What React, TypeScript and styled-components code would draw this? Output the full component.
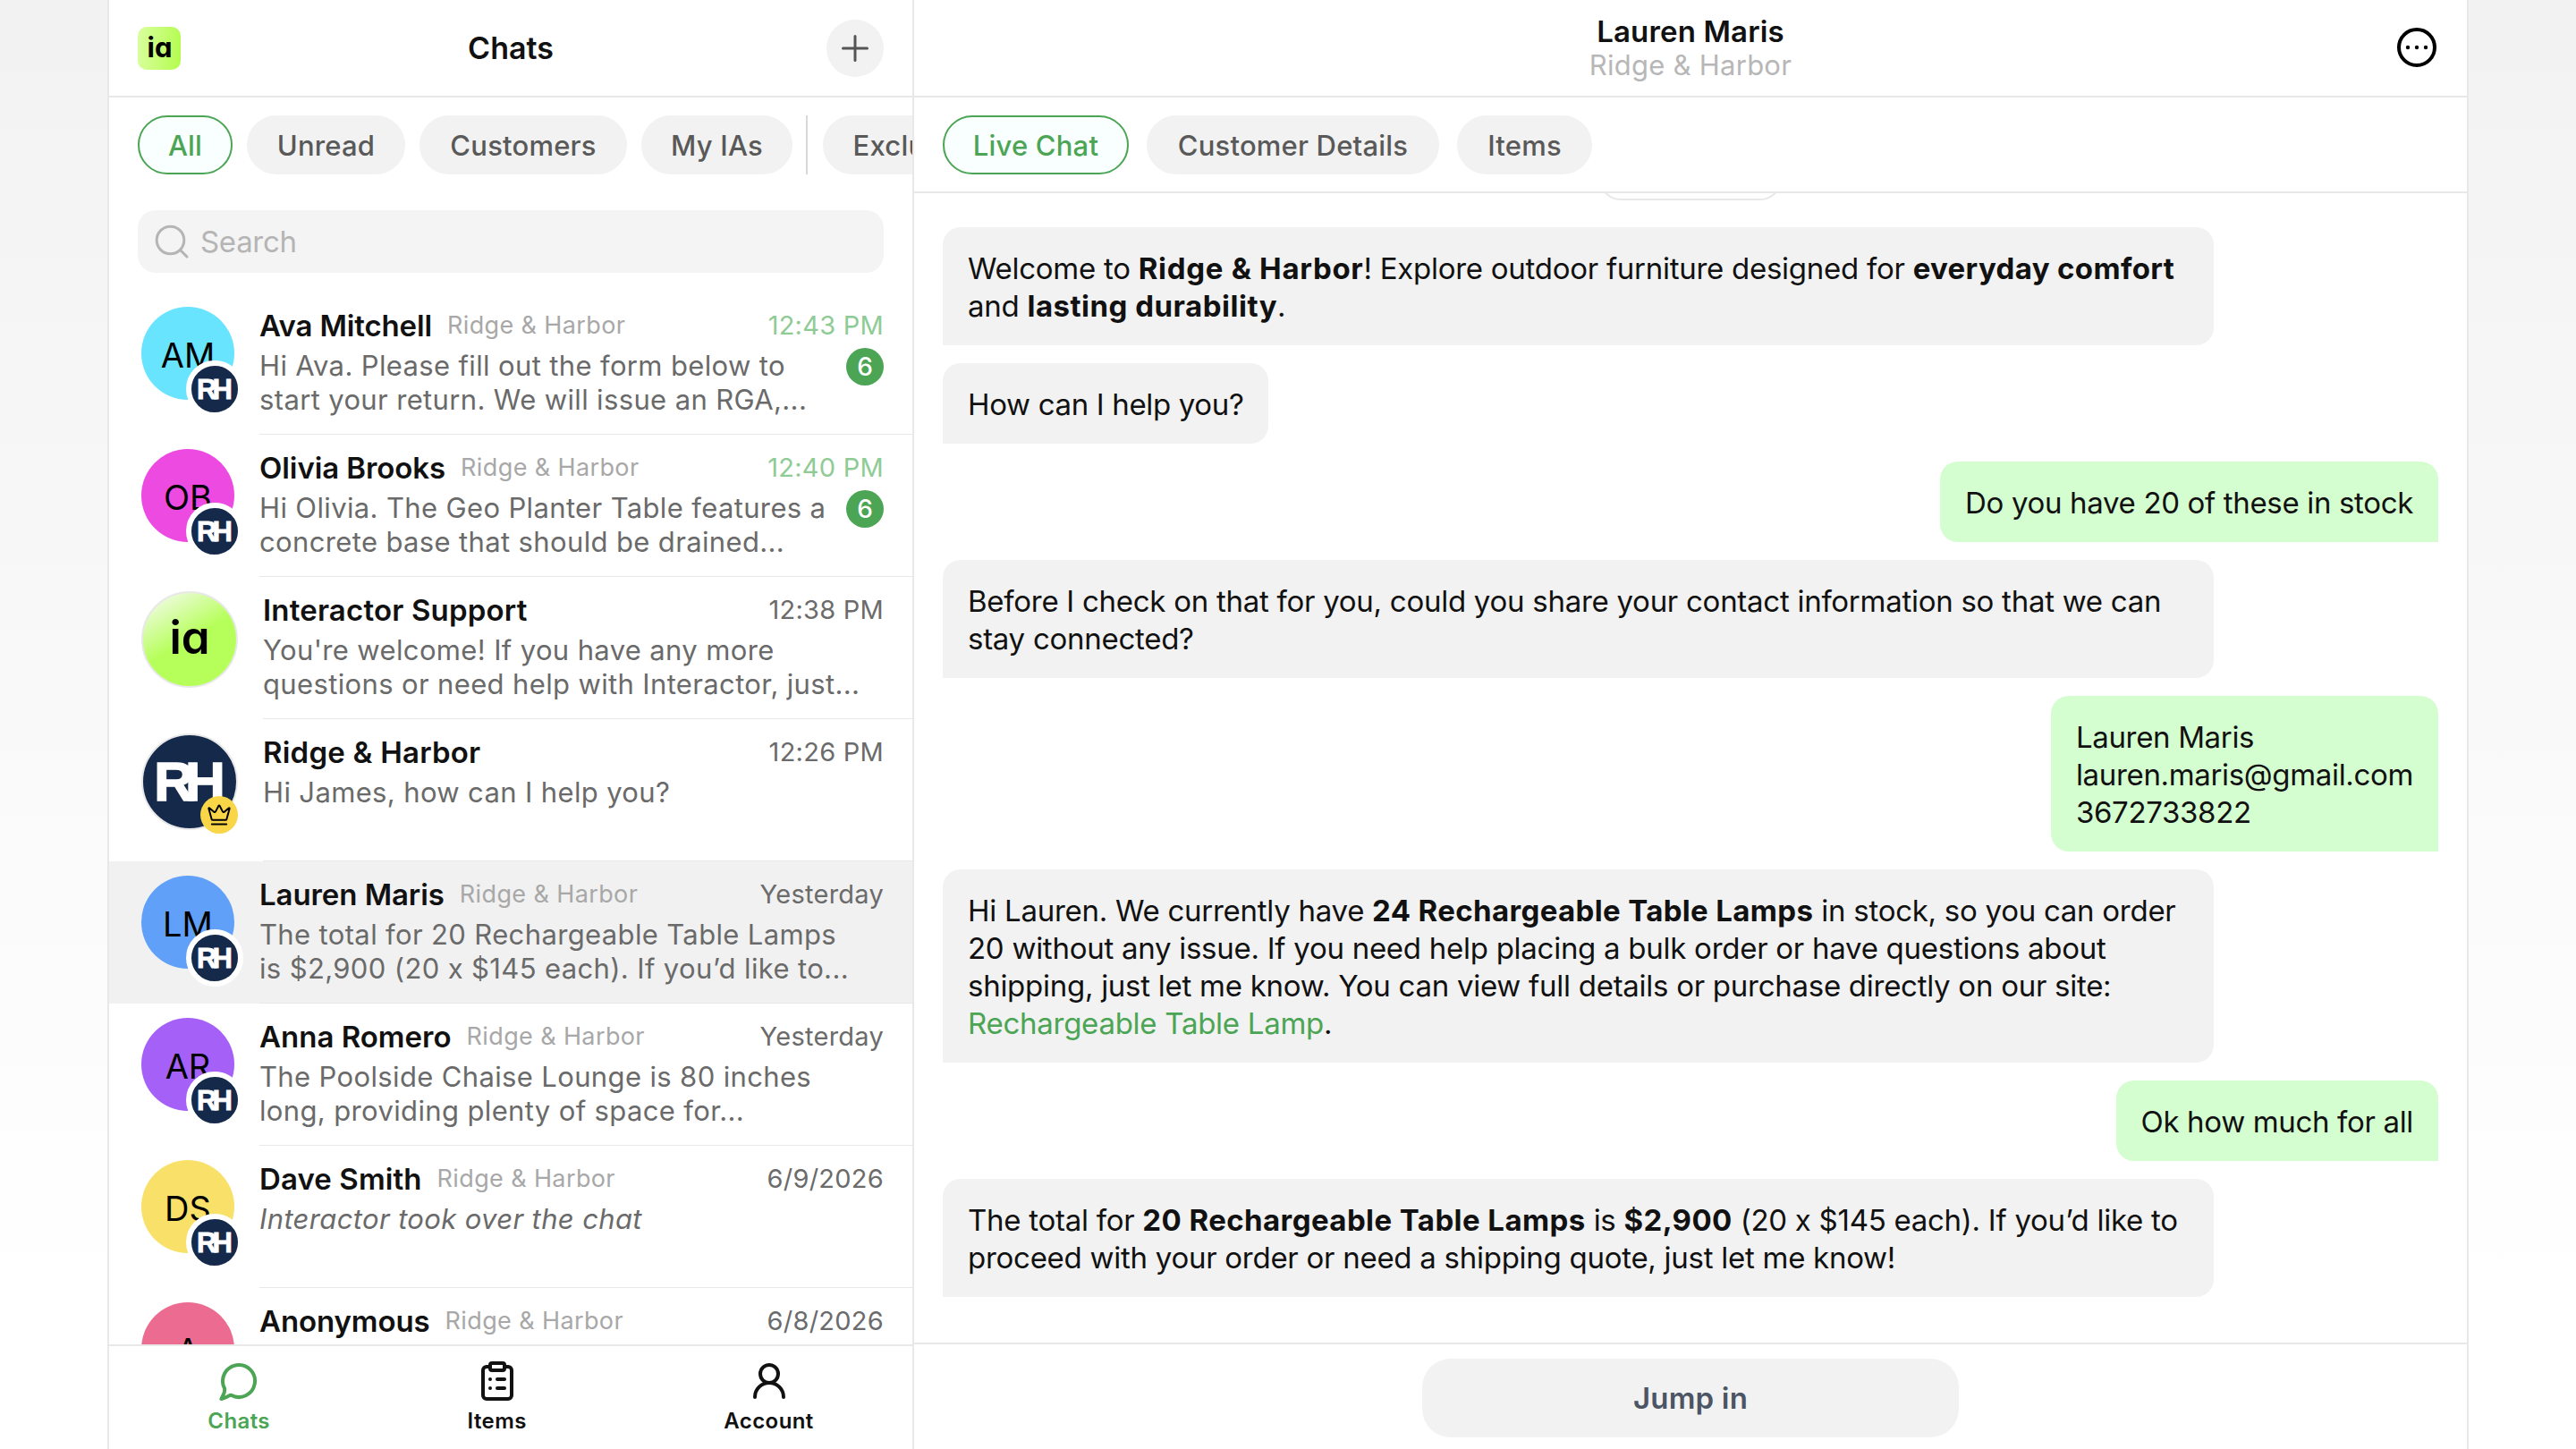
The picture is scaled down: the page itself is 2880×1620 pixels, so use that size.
import React from "react";
import styled, { createGlobalStyle, css } from "styled-components";
import { ClipboardList, Crown, UserRound } from "lucide-react";

const line = "#e8e8e8";
const green = "#4ba554";
const navy = "#15294b";

const GlobalStyle = createGlobalStyle`
  *, *::before, *::after { box-sizing: border-box; }
  html, body { margin: 0; padding: 0; }
  body {
    font-family: Inter, "Liberation Sans", sans-serif;
    color: #111;
    background: #fff;
    overflow: hidden;
  }
  button { font: inherit; border: 0; }
`;

const Page = styled.div`
  display: flex;
  justify-content: center;
  height: 100vh;
  background: linear-gradient(180deg, #f2f2f2 0, #fff 1450px);
`;

const Shell = styled.div`
  display: flex;
  width: 2640px;
  height: 100%;
  background: #fff;
  border: solid ${line};
  border-width: 0 2px;
`;

/* ---------- Sidebar ---------- */

const Sidebar = styled.aside`
  display: flex;
  flex-direction: column;
  flex: none;
  width: 900px;
  border-right: 2px solid ${line};
`;

const SidebarHeader = styled.header`
  display: grid;
  grid-template-columns: 64px 1fr 64px;
  align-items: center;
  flex: none;
  height: 109px;
  padding: 0 32px;
  border-bottom: 2px solid ${line};
`;

const BrandMark = styled.div`
  display: flex;
  align-items: center;
  justify-content: center;
  width: 48px;
  height: 48px;
  padding: 0 0 3px 1px;
  border-radius: 10px;
  background: linear-gradient(95deg, #daff9f, #b3fc4e);
  color: #000;
  font-size: 31px;
  font-weight: 700;
  line-height: 1;
  font-feature-settings: "cv11";
`;

const SidebarTitle = styled.h1`
  margin: 0;
  font-size: 34px;
  font-weight: 600;
  line-height: 40px;
  text-align: center;
`;

const RoundButton = styled.button`
  display: flex;
  align-items: center;
  justify-content: center;
  width: 64px;
  height: 64px;
  padding: 0;
  border-radius: 50%;
  background: #f2f2f2;
`;

const ChipRow = styled.nav<{ $gap: number }>`
  display: flex;
  flex: none;
  gap: ${(p) => p.$gap}px;
  padding: 20px 0 0 32px;
  overflow: hidden;
`;

const SidebarChips = styled(ChipRow)`
  height: 86px;
`;

const Chip = styled.button<{ $active?: boolean; $width: number }>`
  display: flex;
  align-items: center;
  justify-content: center;
  flex: none;
  width: ${(p) => p.$width}px;
  height: 66px;
  padding: 0;
  border: 2px solid ${(p) => (p.$active ? green : "#f2f2f2")};
  border-radius: 33px;
  background: ${(p) => (p.$active ? "#f9fffe" : "#f2f2f2")};
  color: ${(p) => (p.$active ? green : "#595959")};
  font-size: 31px;
  font-weight: 500;
  letter-spacing: 0.2px;
  white-space: nowrap;
`;

const ChipDivider = styled.span`
  flex: none;
  width: 2px;
  height: 66px;
  margin-left: -1px;
  margin-right: 1px;
  background: #d9d9d9;
`;

const SearchBox = styled.div`
  display: flex;
  align-items: center;
  gap: 12px;
  flex: none;
  height: 70px;
  margin: 40px 32px 22px;
  padding: 0 0 0 18px;
  border-radius: 20px;
  background: #f4f4f4;
  color: #b5b5b5;
  font-size: 33px;
  letter-spacing: -0.3px;
`;

const List = styled.div`
  flex: 1;
  min-height: 0;
  overflow: hidden;
`;

const Row = styled.article<{ $selected?: boolean }>`
  display: flex;
  height: 159px;
  padding-left: 36px;
  background: ${(p) => (p.$selected ? "#f1f1f1" : "#fff")};
`;

const AvatarSlot = styled.div`
  position: relative;
  flex: none;
  align-self: flex-start;
  margin: 16px 28px 0 0;
`;

const InitialsAvatar = styled.div<{ $color: string }>`
  display: flex;
  align-items: center;
  justify-content: center;
  width: 104px;
  height: 104px;
  padding-top: 3px;
  border-radius: 50%;
  background: ${(p) => p.$color};
  color: #000;
  font-size: 38px;
  line-height: 1;
`;

const BrandBadge = styled.div`
  position: absolute;
  right: -10px;
  bottom: -20px;
  display: flex;
  align-items: center;
  justify-content: center;
  width: 64px;
  height: 64px;
  border: 6px solid #fff;
  border-radius: 50%;
  background: ${navy};
`;

const Monogram = styled.span<{ $size: number }>`
  margin-right: 0.16em;
  color: #fff;
  font-family: "Liberation Sans", sans-serif;
  font-size: ${(p) => p.$size}px;
  font-weight: 700;
  line-height: 1;
  letter-spacing: -0.16em;
  -webkit-text-stroke: 0.025em #fff;
`;

const LogoAvatar = styled.div<{ $brand: "ia" | "rh" }>`
  display: flex;
  align-items: center;
  justify-content: center;
  width: 108px;
  height: 108px;
  border: 2px solid ${line};
  border-radius: 50%;
  line-height: 1;
  ${(p) =>
    p.$brand === "ia"
      ? css`
          padding-bottom: 5px;
          background: linear-gradient(150deg, #f0fbe2 8%, #b6ff5a 50%);
          color: #000;
          font-size: 51px;
          font-weight: 600;
          font-feature-settings: "cv11";
        `
      : css`
          background: ${navy};
        `}
`;

const CrownBadge = styled.div`
  position: absolute;
  right: 0;
  bottom: -4px;
  display: flex;
  align-items: center;
  justify-content: center;
  width: 42px;
  height: 42px;
  border-radius: 50%;
  background: #f8d648;
  color: #000;
`;

const RowBody = styled.div`
  flex: 1;
  min-width: 0;
  padding: 17px 32px 0 0;
  border-bottom: 1px solid ${line};
`;

const RowTop = styled.div`
  display: flex;
  align-items: center;
  height: 40px;
  line-height: 40px;
  white-space: nowrap;
`;

const Name = styled.span<{ $tracking?: number }>`
  font-size: 33px;
  font-weight: 600;
  letter-spacing: ${(p) => p.$tracking ?? 0}px;
`;

const Company = styled.span`
  margin-left: 17px;
  color: #a8a8a8;
  font-size: 27px;
  letter-spacing: 0.38px;
`;

const Time = styled.span<{ $unread?: boolean }>`
  margin-left: auto;
  color: ${(p) => (p.$unread ? "#8fcb95" : "#6b6b6b")};
  font-size: 29px;
  letter-spacing: 0.25px;
`;

const RowBottom = styled.div`
  display: flex;
  justify-content: space-between;
  align-items: flex-start;
  padding-top: 5px;
`;

const Preview = styled.p<{ $italic?: boolean }>`
  margin: 1px 0 0;
  color: #6a6a6a;
  font-size: 31px;
  font-style: ${(p) => (p.$italic ? "italic" : "normal")};
  line-height: 38px;
  letter-spacing: 0.36px;
  white-space: pre;
`;

const Unread = styled.span`
  display: flex;
  align-items: center;
  justify-content: center;
  width: 42px;
  height: 42px;
  border-radius: 50%;
  background: ${green};
  color: #fff;
  font-size: 28px;
  font-weight: 500;
`;

const BottomNav = styled.nav`
  display: flex;
  justify-content: space-around;
  flex: none;
  height: 117px;
  padding-top: 15px;
  border-top: 2px solid ${line};
`;

const NavItem = styled.a<{ $active?: boolean }>`
  display: flex;
  flex-direction: column;
  align-items: center;
  gap: 7px;
  color: ${(p) => (p.$active ? green : "#111")};
  font-size: 24px;
  font-weight: 600;
  line-height: 28px;
  letter-spacing: 0.4px;
`;

/* ---------- Conversation ---------- */

const Conversation = styled.main`
  display: flex;
  flex-direction: column;
  flex: 1;
  min-width: 0;
`;

const ConversationHeader = styled.header`
  display: grid;
  grid-template-columns: 44px 1fr 44px;
  flex: none;
  height: 109px;
  padding: 16px 34px 0;
  border-bottom: 2px solid ${line};
`;

const Heading = styled.div`
  grid-column: 2;
  text-align: center;
  line-height: 38px;
`;

const ContactName = styled.div`
  font-size: 33px;
  font-weight: 600;
  letter-spacing: 0.15px;
`;

const ContactCompany = styled.div`
  color: #b7b7b7;
  font-size: 31px;
  letter-spacing: 0.25px;
`;

const MoreButton = styled.button`
  display: flex;
  height: 44px;
  margin-top: 15px;
  padding: 0;
  background: none;
`;

const Tabs = styled(ChipRow)`
  height: 107px;
  border-bottom: 2px solid ${line};
`;

const Messages = styled.section`
  display: flex;
  flex-direction: column;
  justify-content: flex-end;
  gap: 20px;
  flex: 1;
  min-height: 0;
  padding: 0 32px 51px;
  overflow: hidden;
`;

const DatePill = styled.div`
  flex: none;
  align-self: center;
  width: 204px;
  height: 60px;
  margin-bottom: 10px;
  border: 2px solid ${line};
  border-radius: 24px;
`;

const Bubble = styled.div<{ $mine?: boolean; $wide?: boolean }>`
  flex: none;
  align-self: ${(p) => (p.$mine ? "flex-end" : "flex-start")};
  width: ${(p) => (p.$wide ? "85%" : "auto")};
  padding: 25px 28px 23px;
  border-radius: ${(p) => (p.$mine ? "20px 20px 0 20px" : "20px 20px 20px 0")};
  background: ${(p) => (p.$mine ? "#d4fdd0" : "#f2f2f2")};
  font-size: 33px;
  line-height: 42px;
  letter-spacing: ${(p) => (p.$wide ? -0.27 : -0.34)}px;
  white-space: pre;
`;

const Strong = styled.strong<{ $tracking?: number }>`
  font-weight: 700;
  letter-spacing: ${(p) => p.$tracking ?? 0.36}px;
`;

const ProductLink = styled.a`
  color: ${green};
`;

const Footer = styled.footer`
  display: flex;
  justify-content: center;
  flex: none;
  height: 119px;
  padding-top: 16px;
  border-top: 2px solid ${line};
`;

const JumpButton = styled.button`
  width: 600px;
  height: 88px;
  border-radius: 32px;
  background: #f2f2f2;
  color: #4b5563;
  font-size: 33px;
  font-weight: 600;
  letter-spacing: 0.2px;
`;

/* ---------- Icons ---------- */

const PlusIcon = () => (
  <svg width="32" height="32" viewBox="0 0 32 32" fill="none" stroke="#555" strokeWidth="3" strokeLinecap="round">
    <path d="M16 2.5v27M2.5 16h27" />
  </svg>
);

const SearchIcon = () => (
  <svg width="40" height="40" viewBox="0 0 40 40" fill="none" stroke="currentColor" strokeWidth="3" strokeLinecap="round">
    <circle cx="18.5" cy="18.5" r="15.3" />
    <path d="M30 30l7 7" />
  </svg>
);

const MoreIcon = () => (
  <svg width="44" height="44" viewBox="0 0 44 44" fill="none">
    <circle cx="22" cy="22" r="20" stroke="#000" strokeWidth="4" />
    <circle cx="12" cy="22" r="2.2" fill="#000" />
    <circle cx="22" cy="22" r="2.2" fill="#000" />
    <circle cx="32" cy="22" r="2.2" fill="#000" />
  </svg>
);

const ChatIcon = () => (
  <svg width="48" height="48" viewBox="0 0 24 24" fill="none" stroke="currentColor" strokeWidth="2" strokeLinejoin="round" strokeLinecap="round">
    <path d="M7.7 19.9A9 9 0 1 0 4 16.1C4.2 17.3 4 18.3 3.5 19.3L2.2 22L5.2 20.9C6.1 20.5 7 19.9 7.7 19.9Z" />
  </svg>
);

/* ---------- Data ---------- */

type Chat = {
  name: string;
  tracking?: number;
  initials?: string;
  color?: string;
  brand?: "ia" | "rh";
  company?: string;
  time: string;
  unread?: number;
  preview: string;
  italic?: boolean;
  selected?: boolean;
};

const company = "Ridge & Harbor";

const chats: Chat[] = [
  { name: "Ava Mitchell", tracking: -0.15, initials: "AM", color: "#68e4fe", company, time: "12:43 PM", unread: 6, preview: "Hi Ava. Please fill out the form below to\nstart your return. We will issue an RGA,..." },
  { name: "Olivia Brooks", tracking: -0.08, initials: "OB", color: "#ed4ae2", company, time: "12:40 PM", unread: 6, preview: "Hi Olivia. The Geo Planter Table features a\nconcrete base that should be drained..." },
  { name: "Interactor Support", tracking: 0.18, brand: "ia", time: "12:38 PM", preview: "You're welcome! If you have any more\nquestions or need help with Interactor, just..." },
  { name: "Ridge & Harbor", tracking: 0.22, brand: "rh", time: "12:26 PM", preview: "Hi James, how can I help you?" },
  { name: "Lauren Maris", tracking: -0.08, initials: "LM", color: "#60a0f8", company, time: "Yesterday", selected: true, preview: "The total for 20 Rechargeable Table Lamps\nis $2,900 (20 x $145 each). If you’d like to..." },
  { name: "Anna Romero", initials: "AR", color: "#a560f8", company, time: "Yesterday", preview: "The Poolside Chaise Lounge is 80 inches\nlong, providing plenty of space for..." },
  { name: "Dave Smith", tracking: 0.1, initials: "DS", color: "#f9e068", company, time: "6/9/2026", italic: true, preview: "Interactor took over the chat" },
  { name: "Anonymous", tracking: -0.1, initials: "A", color: "#ec6b90", company, time: "6/8/2026", preview: "" },
];

const ChatRow = ({ chat }: { chat: Chat }) => (
  <Row $selected={chat.selected}>
    <AvatarSlot>
      {chat.brand ? (
        <LogoAvatar $brand={chat.brand}>{chat.brand === "ia" ? "ia" : <Monogram $size={62}>RH</Monogram>}</LogoAvatar>
      ) : (
        <InitialsAvatar $color={chat.color!}>{chat.initials}</InitialsAvatar>
      )}
      {!chat.brand && (
        <BrandBadge>
          <Monogram $size={31}>RH</Monogram>
        </BrandBadge>
      )}
      {chat.brand === "rh" && (
        <CrownBadge>
          <Crown size={28} strokeWidth={1.7} />
        </CrownBadge>
      )}
    </AvatarSlot>
    <RowBody>
      <RowTop>
        <Name $tracking={chat.tracking}>{chat.name}</Name>
        {chat.company && <Company>{chat.company}</Company>}
        <Time $unread={!!chat.unread}>{chat.time}</Time>
      </RowTop>
      <RowBottom>
        <Preview $italic={chat.italic}>{chat.preview}</Preview>
        {chat.unread && <Unread>{chat.unread}</Unread>}
      </RowBottom>
    </RowBody>
  </Row>
);

export default function App() {
  return (
    <Page>
      <GlobalStyle />
      <Shell>
        <Sidebar>
          <SidebarHeader>
            <BrandMark>ia</BrandMark>
            <SidebarTitle>Chats</SidebarTitle>
            <RoundButton>
              <PlusIcon />
            </RoundButton>
          </SidebarHeader>
          <SidebarChips $gap={16}>
            <Chip $active $width={106}>All</Chip>
            <Chip $width={177}>Unread</Chip>
            <Chip $width={232}>Customers</Chip>
            <Chip $width={169}>My IAs</Chip>
            <ChipDivider />
            <Chip $width={205}>Excluded</Chip>
          </SidebarChips>
          <SearchBox>
            <SearchIcon />
            Search
          </SearchBox>
          <List>
            {chats.map((chat) => (
              <ChatRow key={chat.name} chat={chat} />
            ))}
          </List>
          <BottomNav>
            <NavItem $active>
              <ChatIcon />
              Chats
            </NavItem>
            <NavItem>
              <ClipboardList size={48} strokeWidth={2} />
              Items
            </NavItem>
            <NavItem>
              <UserRound size={48} strokeWidth={2} />
              Account
            </NavItem>
          </BottomNav>
        </Sidebar>
        <Conversation>
          <ConversationHeader>
            <Heading>
              <ContactName>Lauren Maris</ContactName>
              <ContactCompany>Ridge &amp; Harbor</ContactCompany>
            </Heading>
            <MoreButton>
              <MoreIcon />
            </MoreButton>
          </ConversationHeader>
          <Tabs $gap={20}>
            <Chip $active $width={208}>Live Chat</Chip>
            <Chip $width={327}>Customer Details</Chip>
            <Chip $width={151}>Items</Chip>
          </Tabs>
          <Messages>
            <DatePill />
            <Bubble $wide>
              Welcome to <Strong $tracking={0.7}>Ridge &amp; Harbor</Strong>! Explore outdoor furniture designed for <Strong>everyday comfort</Strong>
              <br />
              and <Strong $tracking={0.5}>lasting durability</Strong>.
            </Bubble>
            <Bubble>How can I help you?</Bubble>
            <Bubble $mine>Do you have 20 of these in stock</Bubble>
            <Bubble $wide>
              Before I check on that for you, could you share your contact information so that we can
              <br />
              stay connected?
            </Bubble>
            <Bubble $mine>
              Lauren Maris
              <br />
              lauren.maris@gmail.com
              <br />
              3672733822
            </Bubble>
            <Bubble $wide>
              Hi Lauren. We currently have <Strong>24 Rechargeable Table Lamps</Strong> in stock, so you can order
              <br />
              20 without any issue. If you need help placing a bulk order or have questions about
              <br />
              shipping, just let me know. You can view full details or purchase directly on our site:
              <br />
              <ProductLink>Rechargeable Table Lamp</ProductLink>.
            </Bubble>
            <Bubble $mine>Ok how much for all</Bubble>
            <Bubble $wide>
              The total for <Strong $tracking={0.42}>20 Rechargeable Table Lamps</Strong> is <Strong>$2,900</Strong> (20 x $145 each). If you’d like to
              <br />
              proceed with your order or need a shipping quote, just let me know!
            </Bubble>
          </Messages>
          <Footer>
            <JumpButton>Jump in</JumpButton>
          </Footer>
        </Conversation>
      </Shell>
    </Page>
  );
}
